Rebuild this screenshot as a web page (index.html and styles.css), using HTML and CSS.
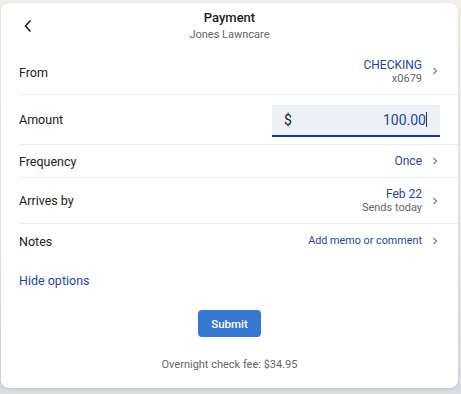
FILE: index.html
```html
<!DOCTYPE html>
<html>
<head>
<meta charset="utf-8">
<link rel="stylesheet" href="styles.css">
</head>
<body>
<div class="card">
  <header class="head">
    <button class="back" aria-label="Back">
      <svg width="10" height="14" viewBox="0 0 10 14"><path d="M7.5 1.5 L2.5 7 L7.5 12.5" fill="none" stroke="#222" stroke-width="1.6"/></svg>
    </button>
    <div class="title">Payment</div>
    <div class="subtitle">Jones Lawncare</div>
  </header>

  <div class="row row-from">
    <span class="label">From</span>
    <span class="value">
      <span class="stack"><span class="main">CHECKING</span><span class="sub">x0679</span></span>
      <svg class="chev" width="6" height="8" viewBox="0 0 6 8"><path d="M1.5 1 L4.5 4 L1.5 7" fill="none" stroke="#777" stroke-width="1.1"/></svg>
    </span>
  </div>

  <div class="row row-amount">
    <span class="label">Amount</span>
    <div class="amount">
      <span class="cur">$</span>
      <span class="num">100.00<span class="caret"></span></span>
    </div>
  </div>

  <div class="row row-freq">
    <span class="label">Frequency</span>
    <span class="value">
      <span class="main">Once</span>
      <svg class="chev" width="6" height="8" viewBox="0 0 6 8"><path d="M1.5 1 L4.5 4 L1.5 7" fill="none" stroke="#777" stroke-width="1.1"/></svg>
    </span>
  </div>

  <div class="row row-arrive">
    <span class="label">Arrives by</span>
    <span class="value">
      <span class="stack"><span class="main">Feb 22</span><span class="sub">Sends today</span></span>
      <svg class="chev" width="6" height="8" viewBox="0 0 6 8"><path d="M1.5 1 L4.5 4 L1.5 7" fill="none" stroke="#777" stroke-width="1.1"/></svg>
    </span>
  </div>

  <div class="row row-notes">
    <span class="label">Notes</span>
    <span class="value">
      <span class="main memo">Add memo or comment</span>
      <svg class="chev" width="6" height="8" viewBox="0 0 6 8"><path d="M1.5 1 L4.5 4 L1.5 7" fill="none" stroke="#777" stroke-width="1.1"/></svg>
    </span>
  </div>

  <div class="hide">Hide options</div>

  <div class="actions">
    <button class="submit">Submit</button>
    <div class="fee">Overnight check fee: $34.95</div>
  </div>
</div>
</body>
</html>
```

FILE: styles.css
```css
* { box-sizing: border-box; }
html, body { height: 100%; }
body {
  margin: 0;
  padding: 3px 3px 0 1px;
  font-family: Roboto, "Liberation Sans", sans-serif;
  background: linear-gradient(180deg, #f2efea 0%, #ecebea 50%, #d9dce1 100%);
  overflow: hidden;
}
.card {
  width: 457px;
  height: 385px;
  background: #fff;
  border-radius: 8px;
  box-shadow: 0 1px 3px rgba(0,0,0,0.12);
  display: flex;
  flex-direction: column;
}
.head {
  position: relative;
  height: 48px;
  display: flex;
  flex-direction: column;
  align-items: center;
  padding-top: 7px;
}
.back {
  position: absolute;
  left: 22px;
  top: 16px;
  border: 0;
  background: none;
  padding: 0;
  width: 10px;
  height: 14px;
  display: block;
}
.back svg { display: block; }
.title {
  font-size: 13px;
  font-weight: 500;
  color: #1c1c1c;
  line-height: 16px;
}
.subtitle {
  font-size: 11px;
  color: #666;
  line-height: 14px;
  margin-top: 2px;
}
.row {
  margin-left: 18px;
  padding-right: 20px;
  display: flex;
  align-items: center;
  justify-content: space-between;
  border-bottom: 1px solid #ebebeb;
}
.label {
  font-size: 12.5px;
  color: #222;
}
.value {
  display: flex;
  align-items: center;
  gap: 10px;
}
.stack {
  display: flex;
  flex-direction: column;
  align-items: flex-end;
}
.main {
  font-size: 12px;
  color: #1f45a6;
  line-height: 14px;
}
.main.memo { font-size: 10.8px; }
.sub {
  font-size: 11px;
  color: #666;
  line-height: 13px;
}
.chev { display: block; }
.row-from { height: 44px; }
.row-from .stack { margin-top: -3px; }
.row-from .chev { margin-top: -3px; }
.row-amount { height: 50px; padding-right: 18px; }
.amount {
  width: 168px;
  height: 32px;
  background: #edf0f5;
  border-bottom: 2px solid #0a3aa6;
  display: flex;
  align-items: center;
  justify-content: space-between;
  padding: 0 13px 0 12px;
  margin-top: 2px;
}
.cur { font-size: 14px; color: #222; }
.num {
  font-size: 14px;
  color: #1f45a6;
  display: flex;
  align-items: center;
}
.caret {
  display: inline-block;
  width: 1px;
  height: 15px;
  background: #333;
}
.row-freq { height: 33px; }
.row-arrive { height: 46px; }
.row-notes { height: 34px; border-bottom: 0; }
.hide {
  margin: 15px 0 0 18px;
  font-size: 12.5px;
  color: #1f45a6;
  line-height: 16px;
}
.actions {
  display: flex;
  flex-direction: column;
  align-items: center;
  margin-top: 21px;
}
.submit {
  width: 63px;
  height: 27px;
  border: 0;
  border-radius: 4px;
  background: #3677cf;
  color: #fff;
  font-family: Roboto, "Liberation Sans", sans-serif;
  font-size: 11.5px;
  font-weight: 500;
  padding: 0;
}
.fee {
  margin-top: 21px;
  font-size: 11px;
  color: #666;
}
```
